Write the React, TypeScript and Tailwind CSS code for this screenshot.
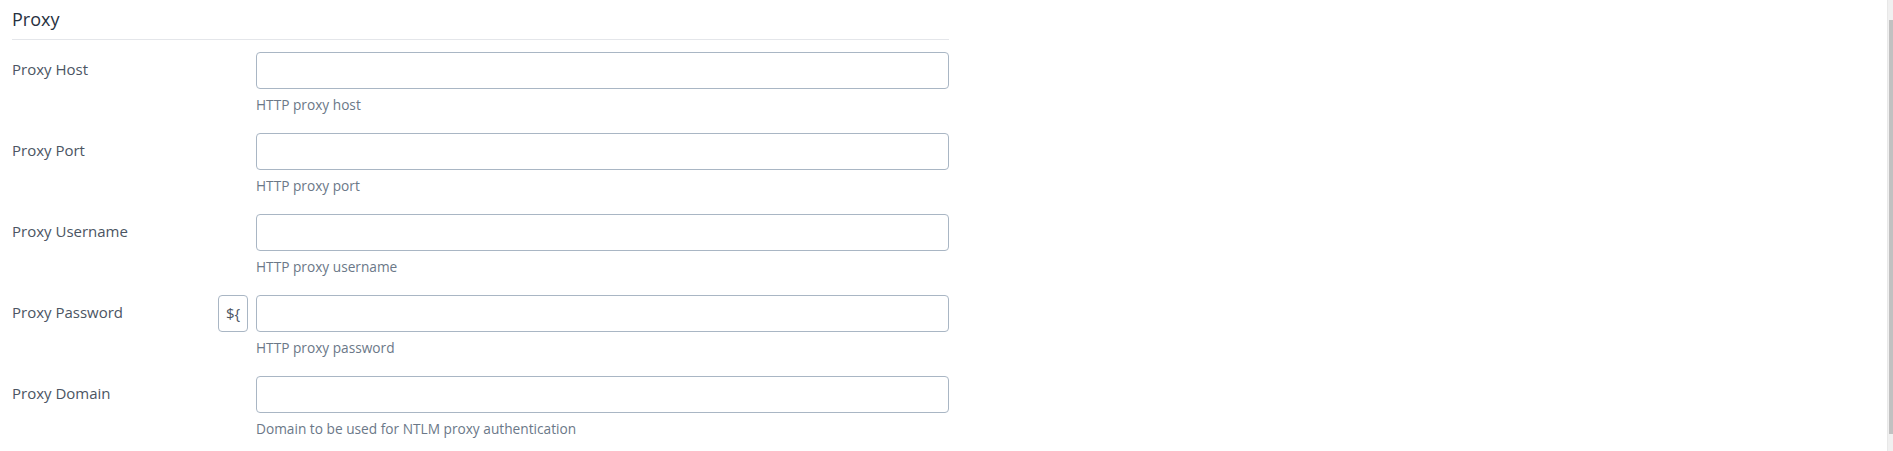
import React from 'react';

interface Field {
  label: string;
  help: string;
  expression?: boolean;
}

const FIELDS: Field[] = [
  { label: 'Proxy Host', help: 'HTTP proxy host' },
  { label: 'Proxy Port', help: 'HTTP proxy port' },
  { label: 'Proxy Username', help: 'HTTP proxy username' },
  { label: 'Proxy Password', help: 'HTTP proxy password', expression: true },
  { label: 'Proxy Domain', help: 'Domain to be used for NTLM proxy authentication' },
];

function FieldRow({ field }: { field: Field }) {
  return (
    <div className="flex h-[81px]">
      <label className="w-[206px] pt-[7px] text-[15px] leading-[20px] text-[#4b5563]">{field.label}</label>
      <div className="w-[38px]">
        {field.expression && (
          <button className="w-[30px] h-[37px] rounded-[4px] border border-[#a9b6c4] bg-white text-[15px] text-[#4b5563]">
            ${'{'}
          </button>
        )}
      </div>
      <div className="w-[693px]">
        <input className="block w-full h-[37px] rounded-[4px] border border-[#a9b6c4] bg-white outline-none" />
        <div className="mt-[7px] text-[13.7px] leading-[18px] text-[#6b7888]">{field.help}</div>
      </div>
    </div>
  );
}

export default function App() {
  return (
    <div className="flex h-[451px] w-full bg-white font-['Open_Sans',sans-serif]">
      <div className="flex-1 pl-3">
        <div className="w-[937px]">
          <h2 className="pt-[7px] pb-[8px] text-[18px] leading-[24px] font-medium text-[#27313f] border-b border-[#e4e6ea]">
            Proxy
          </h2>
          <div className="pt-[12px]">
            {FIELDS.map((field) => (
              <FieldRow key={field.label} field={field} />
            ))}
          </div>
        </div>
      </div>
      <div className="w-[6px] bg-[#f0f0f0] border-l border-[#e8e8e8] pt-[20px] pb-[17px] flex justify-end">
        <div className="w-[4px] h-full bg-[#c1c1c1]" />
      </div>
    </div>
  );
}
